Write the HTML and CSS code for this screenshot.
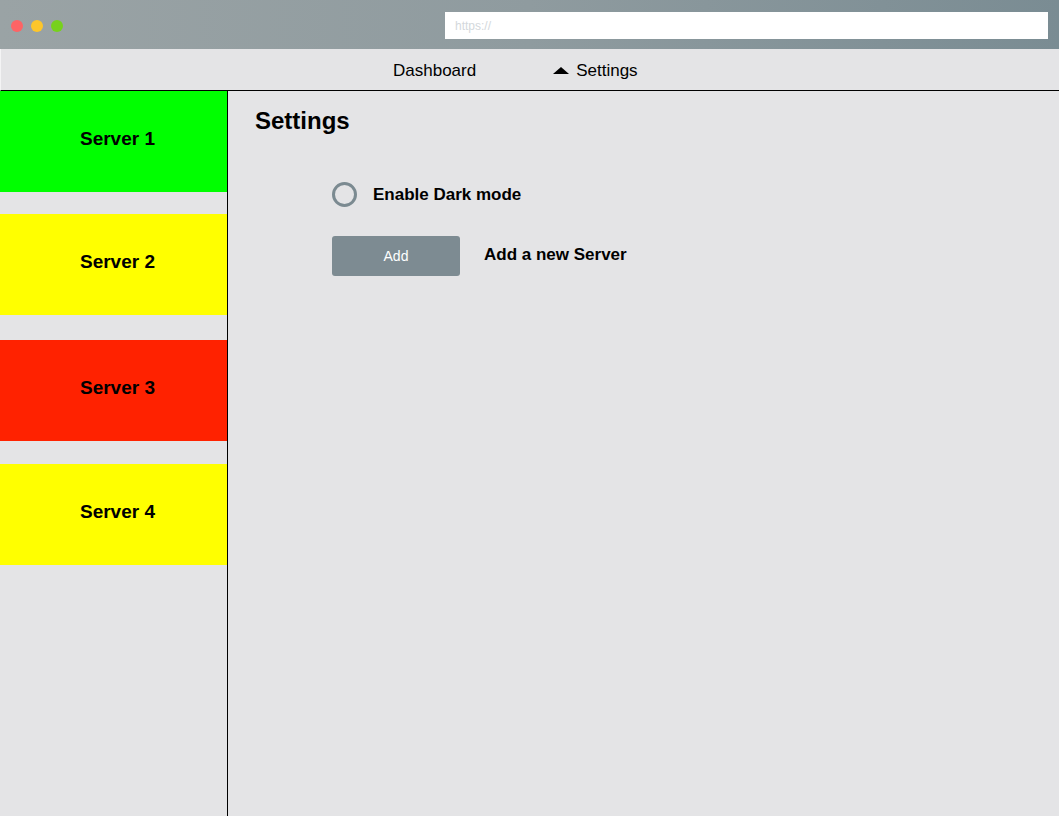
FILE: index.html
```html
<!DOCTYPE html>
<html>
<head>
<meta charset="utf-8">
<link rel="stylesheet" href="styles.css">
</head>
<body>
<div class="window">
  <div class="titlebar">
    <div class="dots">
      <span class="dot red"></span>
      <span class="dot yellow"></span>
      <span class="dot green"></span>
    </div>
    <div class="url">https://</div>
  </div>
  <nav class="nav">
    <a class="nav-item dash">Dashboard</a>
    <a class="nav-item settings"><span class="tri"></span>Settings</a>
  </nav>
  <div class="main">
    <aside class="sidebar">
      <div class="server s-green s1">Server 1</div>
      <div class="server s-yellow s2">Server 2</div>
      <div class="server s-red s3">Server 3</div>
      <div class="server s-yellow s4">Server 4</div>
    </aside>
    <section class="content">
      <h1 class="title">Settings</h1>
      <div class="options">
        <div class="row">
          <span class="radio"></span>
          <span class="label">Enable Dark mode</span>
        </div>
        <div class="row row-add">
          <button class="btn">Add</button>
          <span class="label">Add a new Server</span>
        </div>
      </div>
    </section>
  </div>
</div>
</body>
</html>
```
FILE: styles.css
```css
* { box-sizing: border-box; }
html, body { margin: 0; padding: 0; }
body {
  width: 1059px;
  height: 816px;
  overflow: hidden;
  background: #e4e4e6;
  font-family: "Liberation Sans", Arial, sans-serif;
  color: #000;
}
.window { display: flex; flex-direction: column; height: 816px; }
.titlebar {
  height: 49px;
  flex: none;
  display: flex;
  align-items: center;
  background: linear-gradient(90deg, #9aa3a5 0%, #8f9b9f 50%, #7a8c93 100%);
  padding: 0 11px 0 11px;
}
.dots { display: flex; gap: 8px; margin-top: 2px; }
.dot { width: 12px; height: 12px; border-radius: 50%; display: block; }
.red { background: #fd6465; }
.yellow { background: #fdc62b; }
.green { background: #77d11c; }
.url {
  margin-left: auto;
  width: 603px;
  height: 27px;
  background: #fff;
  color: #d3d8dc;
  font-size: 12px;
  line-height: 28px;
  padding-left: 10px;
  margin-top: 1px;
}
.nav {
  height: 42px;
  flex: none;
  display: flex;
  align-items: center;
  border-bottom: 1px solid #000;
  border-left: 1px solid #f4f4f5;
  padding-left: 392px;
  padding-top: 3px;
}
.nav-item { font-size: 17px; display: flex; align-items: center; }
.dash { margin-right: 77px; }
.tri {
  width: 0; height: 0;
  border-left: 8px solid transparent;
  border-right: 8px solid transparent;
  border-bottom: 7px solid #000;
  margin-right: 7px;
  margin-top: -1px;
}
.main { flex: 1; display: flex; }
.sidebar {
  width: 228px;
  flex: none;
  border-right: 1px solid #000;
  display: flex;
  flex-direction: column;
}
.server {
  height: 101px;
  flex: none;
  display: flex;
  align-items: center;
  justify-content: center;
  font-weight: bold;
  font-size: 19px;
  padding-left: 8px;
  padding-bottom: 6px;
}
.s1 { margin-bottom: 22px; }
.s2 { margin-bottom: 25px; }
.s3 { margin-bottom: 23px; }
.s-green { background: #00ff00; }
.s-yellow { background: #ffff00; }
.s-red { background: #ff2200; }
.content { flex: 1; padding: 16px 0 0 27px; }
.title { margin: 0; font-size: 24px; font-weight: bold; line-height: 28px; }
.options { padding-left: 77px; padding-top: 47px; display: flex; flex-direction: column; gap: 29px; }
.row { display: flex; align-items: center; }
.radio {
  width: 25px; height: 25px;
  border: 3px solid #7b8a91;
  border-radius: 50%;
  margin-right: 16px;
}
.label { font-size: 17px; font-weight: bold; }
.btn {
  width: 128px; height: 40px;
  background: #7d8b92;
  border: none;
  border-radius: 3px;
  color: #fff;
  font-family: "Liberation Sans", Arial, sans-serif;
  font-size: 14px;
  margin-right: 24px;
  padding: 0;
}
.row-add .label { margin-top: -2px; }
```
